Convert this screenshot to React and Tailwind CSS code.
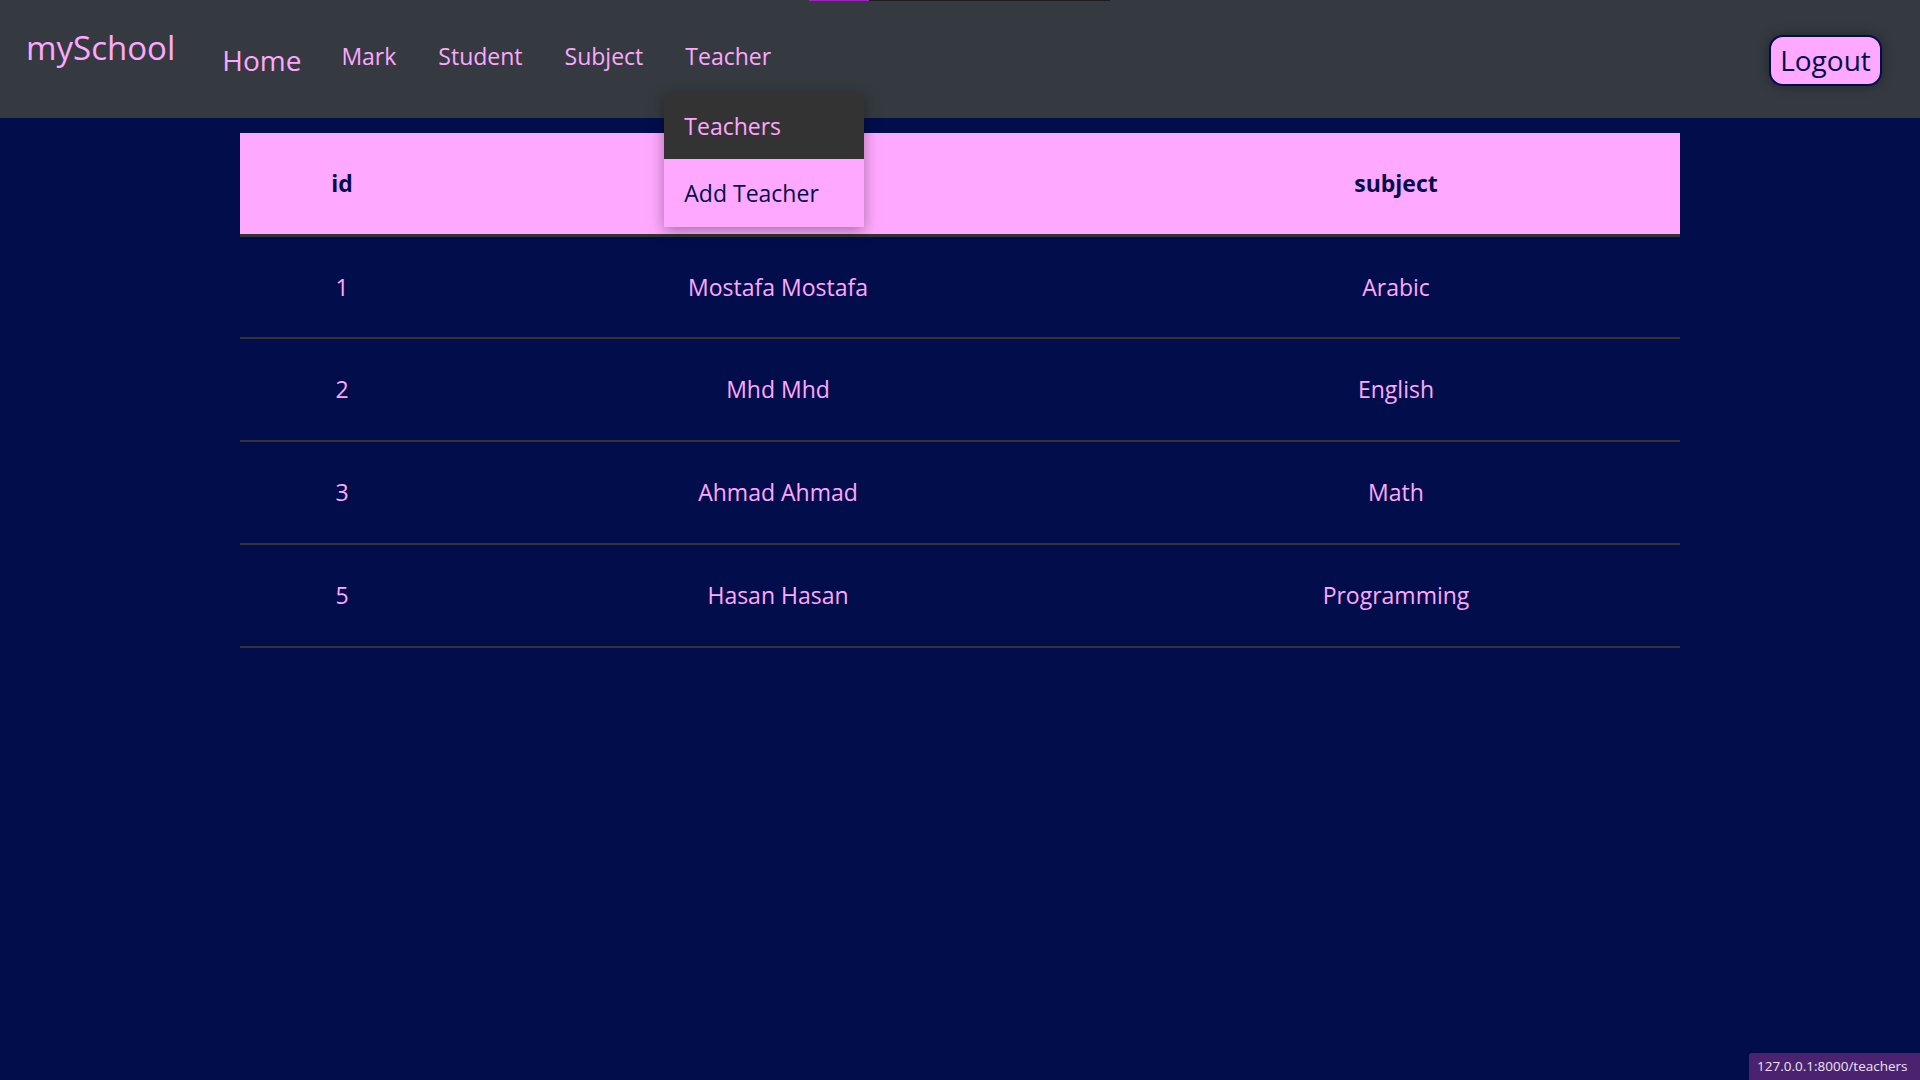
import React from 'react';

const font = { fontFamily: '"Open Sans", "Noto Sans", sans-serif' };

const teachers = [
    { id: 1, name: 'Mostafa Mostafa', subject: 'Arabic' },
    { id: 2, name: 'Mhd Mhd', subject: 'English' },
    { id: 3, name: 'Ahmad Ahmad', subject: 'Math' },
    { id: 5, name: 'Hasan Hasan', subject: 'Programming' },
];

const NavLink = ({ children, className = '' }) => (
    <li className={`text-[23px] leading-[32px] text-[#ffa8ff] ${className}`}>{children}</li>
);

const App = () => {
    return (
        <div className="relative min-h-[1080px] bg-[#020e4c]" style={font}>
            {/* loading bar at the very top */}
            <div className="absolute top-0 left-[809px] flex h-px w-[301px] z-20">
                <div className="w-[60px] bg-[#a020c0]"></div>
                <div className="flex-1 bg-[#1e1e1e]"></div>
            </div>

            {/* Navbar */}
            <nav className="relative z-10 flex h-[118px] items-center bg-[#343a40] pl-[26px] pr-[38px]">
                <a className="mb-[22px] text-[33px] leading-[42px] text-[#ffa8ff]">mySchool</a>
                <ul className="ml-[27px] flex items-center">
                    <NavLink className="mt-[2px] px-[20px] text-[28px]">Home</NavLink>
                    <NavLink className="mb-[6px] pl-[20px] pr-[21px]">Mark</NavLink>
                    <NavLink className="mb-[6px] px-[21px]">Student</NavLink>
                    <NavLink className="mb-[6px] px-[21px]">Subject</NavLink>
                    <li className="relative mb-[6px] pl-[21px] pr-[20px] text-[23px] leading-[32px] text-[#ffa8ff]">
                        Teacher
                        {/* dropdown */}
                        <div className="absolute left-0 top-[calc(100%+21px)] w-[200px] shadow-[0_4px_14px_rgba(0,0,0,0.35)]">
                            <div className="flex h-[66px] items-center bg-[#333333] px-[20px] text-[23px] text-[#ffa8ff]">Teachers</div>
                            <div className="flex h-[68px] items-center bg-[#ffa8ff] px-[20px] text-[23px] text-[#020e4c]">Add Teacher</div>
                        </div>
                    </li>
                </ul>
                <div className="ml-auto">
                    <button className="mt-[2px] h-[51px] w-[113px] rounded-[14px] border-2 border-[#020e4c] bg-[#ffa8ff] text-[28px] leading-none text-[#020e4c] shadow-[0_0_12px_rgba(0,0,0,0.35)]">
                        Logout
                    </button>
                </div>
            </nav>

            {/* Table */}
            <div className="mx-auto mt-[15px] w-[1440px]">
                <table className="w-full border-collapse text-center text-[23px]">
                    <thead>
                        <tr className="h-[102px] border-b-[3px] border-[#333333] bg-[#ffa8ff] text-[#020e4c]">
                            <th className="w-[204px] font-bold">id</th>
                            <th className="w-[668px] font-bold"></th>
                            <th className="font-bold">subject</th>
                        </tr>
                    </thead>
                    <tbody className="text-[#ffa8ff]">
                        {teachers.map((t) => (
                            <tr key={t.id} className="h-[103px] border-b-2 border-[#333333]">
                                <td>{t.id}</td>
                                <td>{t.name}</td>
                                <td>{t.subject}</td>
                            </tr>
                        ))}
                    </tbody>
                </table>
            </div>

            {/* status bar */}
            <div className="absolute bottom-0 right-0 flex h-[27px] w-[171px] items-center rounded-tl-[3px] bg-[#4a2270] pl-[8px] text-[13.5px] text-[#ece4f4]">
                127.0.0.1:8000/teachers
            </div>
        </div>
    );
};

export default App;
